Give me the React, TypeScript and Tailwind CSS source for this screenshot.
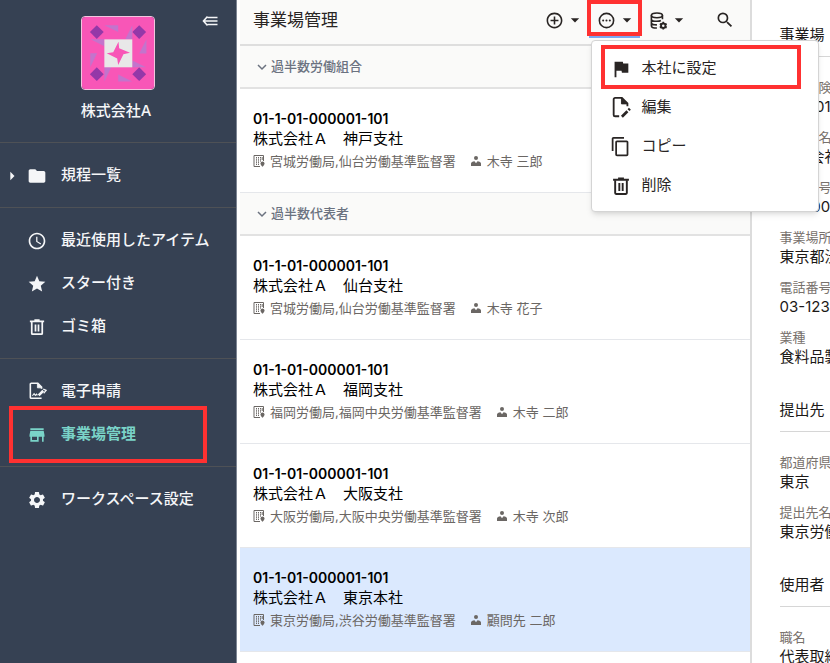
import React, { type ReactNode } from "react";
import {
  MdAccessTime,
  MdAddCircleOutline,
  MdArrowDropDown,
  MdArrowRight,
  MdContentCopy,
  MdFlag,
  MdFolder,
  MdSearch,
  MdSettings,
  MdStar,
  MdStore,
} from "react-icons/md";

function TrashIcon({ size }: { size: number }) {
  return (
    <svg width={size} height={size} viewBox="0 0 24 24" fill="none" stroke="currentColor" strokeWidth="2.300" aria-hidden="true">
      <path d="M2.500 4.500h19M8.500 3h7" strokeWidth="2.600" />
      <path d="M5 5v15.500a1 1 0 0 0 1 1h12a1 1 0 0 0 1-1V5M10 8.500v9.500M14 8.500v9.500" />
    </svg>
  );
}

function MoreIcon() {
  return (
    <svg width="19" height="19" viewBox="0 0 24 24" fill="currentColor" aria-hidden="true">
      <circle cx="12" cy="12" r="9" fill="none" stroke="currentColor" strokeWidth="2" />
      <circle cx="7.800" cy="12" r="1.300" />
      <circle cx="12" cy="12" r="1.300" />
      <circle cx="16.200" cy="12" r="1.300" />
    </svg>
  );
}

function DatabaseGearIcon() {
  return (
    <svg width="19" height="19" viewBox="0 0 24 24" fill="none" stroke="currentColor" strokeWidth="2" aria-hidden="true">
      <ellipse cx="10" cy="5.500" rx="7" ry="3" />
      <path d="M3 5.500v13c0 1.700 3 3 7 3M17 5.500v5M3 10c0 1.700 3 3 7 3 2 0 4-.4 5-1M3 14.500c0 1.700 3 3 7 3" />
      <circle cx="18" cy="18.500" r="2.800" strokeWidth="2.400" />
      <path d="M18 13.500v2M18 21.500v2M13.700 16l1.700 1M20.600 20l1.700 1M13.700 21l1.700-1M20.600 17l1.700-1" strokeWidth="2.200" />
    </svg>
  );
}

function FileEditIcon() {
  return (
    <svg width="22" height="22" viewBox="0 0 24 24" fill="none" stroke="currentColor" strokeWidth="2" aria-hidden="true">
      <path d="M10 21H5.500A1.500 1.500 0 0 1 4 19.500v-17A1.500 1.500 0 0 1 5.500 1H13l6 6v3" />
      <path d="M12.500 1v6.500H19z" fill="currentColor" strokeWidth="1" />
      <path d="M13 21.500l6-6" strokeWidth="3" />
      <path d="M20.200 14.300l1.500-1.500" strokeWidth="3" />
    </svg>
  );
}

function FileSignIcon() {
  return (
    <svg width="20" height="20" viewBox="0 0 24 24" fill="none" stroke="currentColor" strokeWidth="1.900" aria-hidden="true">
      <path d="M17.500 19.500H5a1 1 0 0 1-1-1V2.500a1 1 0 0 1 1-1h8l4.500 4.500v2" />
      <path d="M12.500 1.500v5.500h5.500z" fill="currentColor" strokeWidth="1" />
      <path d="M6.500 16.500l2-2.500 1.500 2 1.500-1.500 1 1.500" strokeWidth="1.300" />
      <path d="M14 16l5.500-5.500" strokeWidth="3" />
      <path d="M19.500 8.500l3.500 1.500-3 3.500" strokeWidth="1.500" />
    </svg>
  );
}

function CollapseIcon() {
  return (
    <svg width="16" height="12" viewBox="0 0 16 12" fill="none" stroke="currentColor" strokeWidth="1.600" aria-hidden="true">
      <path d="M5.500 1.500L1.500 6l4 4.500M2 6h13.500M5.500 2.500h10M5.500 9.500h10" />
    </svg>
  );
}

function BuildingIcon() {
  return (
    <svg className="shrink-0" width="12" height="12" viewBox="0 0 12 12" fill="none" stroke="currentColor" aria-hidden="true">
      <path d="M7 11.500H1V.5h9.500V6" />
      <path d="M3.500 2v8M5.500 2v8M7.500 2v5" strokeDasharray="1.500 .7" />
      <path d="M9.500 6.500a2 2 0 0 0-2 2c0 1.500 2 3.300 2 3.300s2-1.800 2-3.300a2 2 0 0 0-2-2z" fill="currentColor" stroke="none" />
      <path d="M9.200 2v3" />
    </svg>
  );
}

function PersonIcon() {
  return (
    <svg className="shrink-0" width="10" height="12" viewBox="0 0 10 12" fill="currentColor" aria-hidden="true">
      <circle cx="5" cy="3" r="2" />
      <path d="M0 11V8.500C0 7.300 1.500 6.600 3.500 6.300L5 8.300l1.500-2C8.500 6.600 10 7.300 10 8.500V11z" />
    </svg>
  );
}

function ChevronIcon() {
  return (
    <svg className="shrink-0" width="10" height="8" viewBox="0 0 10 8" fill="none" stroke="currentColor" strokeWidth="1.500" aria-hidden="true">
      <path d="M1 2l4 4 4-4" />
    </svg>
  );
}

function Avatar() {
  return (
    <svg className="h-[74px] w-[74px] rounded border border-[#f3c4df]" viewBox="0 0 219 219" role="img" aria-label="株式会社A">
      <rect width="219" height="219" fill="#f856b7" />
      <g fill="#9438a8">
        <path d="M45 25l21 21-21 21-21-21z" />
        <path d="M174 25l21 21-21 21-21-21z" />
        <path d="M45 153l21 21-21 21-21-21z" />
        <path d="M174 153l21 21-21 21-21-21z" />
      </g>
      <g fill="#c374cc">
        <path d="M68 25h42v21z" />
        <path d="M153 25v42h-21z" />
        <path d="M196 68v43h-22z" />
        <path d="M153 132l42 21h-42z" />
        <path d="M153 196h-43v-21z" />
        <path d="M68 196v-43h21z" />
        <path d="M25 153v-43h21z" />
        <path d="M68 89l-42-21h42z" />
      </g>
      <rect x="68" y="68" width="85" height="85" fill="#e8e8e8" />
      <path d="M111 75L113 95 146 109 126 113 110 146 107 126 75 110 95 107z" fill="#f856b7" />
    </svg>
  );
}

type NavEntry = { label: string; icon: ReactNode; active?: boolean; expandable?: boolean };

const navSections: NavEntry[][] = [
  [{ label: "規程一覧", icon: <MdFolder size={20} />, expandable: true }],
  [
    { label: "最近使用したアイテム", icon: <MdAccessTime size={20} /> },
    { label: "スター付き", icon: <MdStar size={20} /> },
    { label: "ゴミ箱", icon: <TrashIcon size={18} /> },
  ],
  [
    { label: "電子申請", icon: <FileSignIcon /> },
    { label: "事業場管理", icon: <MdStore size={20} />, active: true },
  ],
  [{ label: "ワークスペース設定", icon: <MdSettings size={20} /> }],
];

function Sidebar() {
  return (
    <aside className="w-[237px] shrink-0 border-r border-[#7d8593] bg-[#364153] text-[#f5f6f8]">
      <div className="relative flex h-[142px] flex-col items-center pt-4">
        <Avatar />
        <p className="mt-[10px] pr-1 text-[15px] leading-[22px] font-medium">株式会社A</p>
        <button type="button" aria-label="サイドバーを閉じる" className="absolute top-[15px] right-[18px]">
          <CollapseIcon />
        </button>
      </div>
      <nav>
        {navSections.map((section) => (
          <ul key={section[0].label} className="border-t border-[#4e5156] py-[10px] pt-[11px]">
            {section.map((entry) => (
              <li key={entry.label} className="relative">
                <a
                  href="#"
                  className={`flex h-[43px] items-center text-[15px] ${entry.active ? "font-bold text-[#7ad3c8]" : "font-medium"}`}
                >
                  <span className="flex w-[26px] justify-center pr-[2px]">{entry.expandable && <MdArrowRight size={20} />}</span>
                  <span className="flex w-[35px] items-center">
                    <span className="flex w-[21px] justify-center">{entry.icon}</span>
                  </span>
                  {entry.label}
                </a>
                {entry.active && <span className="pointer-events-none absolute -top-[7px] -bottom-[7px] left-[9px] w-[198px] border-4 border-[#ff3131]" />}
              </li>
            ))}
          </ul>
        ))}
      </nav>
    </aside>
  );
}

const menuEntries = [
  { label: "本社に設定", icon: <MdFlag size={22} />, marked: true },
  { label: "編集", icon: <FileEditIcon /> },
  { label: "コピー", icon: <MdContentCopy size={21} /> },
  { label: "削除", icon: <TrashIcon size={20} /> },
];

function ActionMenu() {
  return (
    <ul role="menu" className="absolute top-[40px] left-[2px] z-10 w-[228px] rounded border border-[#d4d4d4] bg-white pt-2 pb-1.5 shadow-md">
      {menuEntries.map((entry) => (
        <li key={entry.label} role="none" className="relative">
          <button type="button" role="menuitem" className="flex h-[39px] w-full items-center pl-[18px] text-left text-[15px]">
            <span className="flex w-[32px] items-center">
              <span className="flex w-[22px] justify-center">{entry.icon}</span>
            </span>
            {entry.label}
          </button>
          {entry.marked && <span className="pointer-events-none absolute -top-[4px] -bottom-[1px] left-[9px] w-[200px] border-4 border-[#ff3131]" />}
        </li>
      ))}
    </ul>
  );
}

function ToolButton({ label, children }: { label: string; children: ReactNode }) {
  return (
    <button type="button" aria-label={label} className="flex h-10 w-[52px] items-center pl-[8px]">
      {children}
      <MdArrowDropDown className="ml-px" size={20} />
    </button>
  );
}

type Office = { name: string; bureau: string; person: string; selected?: boolean };

const groups: { title: string; offices: Office[] }[] = [
  {
    title: "過半数労働組合",
    offices: [{ name: "神戸支社", bureau: "宮城労働局,仙台労働基準監督署", person: "木寺 三郎" }],
  },
  {
    title: "過半数代表者",
    offices: [
      { name: "仙台支社", bureau: "宮城労働局,仙台労働基準監督署", person: "木寺 花子" },
      { name: "福岡支社", bureau: "福岡労働局,福岡中央労働基準監督署", person: "木寺 二郎" },
      { name: "大阪支社", bureau: "大阪労働局,大阪中央労働基準監督署", person: "木寺 次郎" },
      { name: "東京本社", bureau: "東京労働局,渋谷労働基準監督署", person: "顧問先 二郎", selected: true },
    ],
  },
];

function OfficeList() {
  return (
    <main className="w-[62%] shrink-0 border-r-2 border-[#dcdcdc] bg-white pl-[3px]">
      <header className="flex h-[46px] items-start border-b-2 border-[#dedede] bg-[#fafaf9] pl-[13px] text-[#292524]">
        <h1 className="text-[17px] leading-10">事業場管理</h1>
        <div className="ml-auto flex pr-[7px]">
          <ToolButton label="追加">
            <MdAddCircleOutline size={19} />
          </ToolButton>
          <div className="relative">
            <ToolButton label="その他の操作">
              <MoreIcon />
            </ToolButton>
            <span className="pointer-events-none absolute top-0 left-0 h-[38px] w-[51px] border-b-2 border-[#7ba7f0]" />
            <span className="pointer-events-none absolute top-0 -left-[2px] h-[36px] w-[55px] border-4 border-[#ff3131]" />
            <ActionMenu />
          </div>
          <ToolButton label="データ管理">
            <DatabaseGearIcon />
          </ToolButton>
          <button type="button" aria-label="検索" className="ml-[14px] flex h-10 w-9 items-center justify-center">
            <MdSearch size={20} />
          </button>
        </div>
      </header>
      {groups.map((group) => (
        <section key={group.title}>
          <h2 className="h-[43px] border-b-2 border-[#e2e2e2] bg-[#fafaf9] text-[13px] font-medium text-[#6b7280]">
            <button type="button" className="flex h-[41px] items-center gap-[4px] pl-[17px]">
              <ChevronIcon />
              {group.title}
            </button>
          </h2>
          <ul>
            {group.offices.map((office) => (
              <li
                key={office.name}
                className={`h-[104px] border-b border-[#e5e7eb] pt-5 pl-[13px] whitespace-nowrap ${office.selected ? "bg-[#dbe9fe]" : "bg-white"}`}
              >
                <p className="text-[14px] leading-5 font-semibold text-black">01-1-01-000001-101</p>
                <p className="text-[15px] leading-5 text-black">株式会社Ａ　{office.name}</p>
                <p className="flex items-center text-[13px] leading-6 text-[#6b6764]">
                  <BuildingIcon />
                  <span className="mr-[15px] ml-[5px]">{office.bureau}</span>
                  <PersonIcon />
                  <span className="ml-[6px]">{office.person}</span>
                </p>
              </li>
            ))}
          </ul>
        </section>
      ))}
    </main>
  );
}

const detailSections = [
  {
    title: "事業場",
    fields: [
      ["労働保険番号", "01-1-01-000001-101"],
      ["事業場名", "株式会社Ａ"],
      ["郵便番号", "150-0002"],
      ["事業場所在地", "東京都渋谷区"],
      ["電話番号", "03-1234-5678"],
      ["業種", "食料品製造業"],
    ],
  },
  {
    title: "提出先",
    fields: [
      ["都道府県", "東京"],
      ["提出先名", "東京労働局"],
    ],
  },
  { title: "使用者", fields: [["職名", "代表取締役"]] },
];

function DetailPanel() {
  return (
    <section className="flex min-w-0 flex-1 flex-col gap-[31px] overflow-hidden pt-[23px] pl-7 whitespace-nowrap text-[#1c1917]">
      {detailSections.map((section) => (
        <div key={section.title}>
          <h2 className="border-b border-[#d6d6d6] pb-[9px] text-[15px] leading-6">{section.title}</h2>
          <dl className="mt-5 flex flex-col gap-[10px]">
            {section.fields.map(([label, value]) => (
              <div key={label}>
                <dt className="text-[13px] leading-5 text-[#78716c]">{label}</dt>
                <dd className="text-[15px] leading-5">{value}</dd>
              </div>
            ))}
          </dl>
        </div>
      ))}
    </section>
  );
}

export default function App() {
  return (
    <div className="flex h-screen overflow-hidden bg-white font-['Inter','Noto_Sans_CJK_JP',sans-serif]" lang="ja">
      <Sidebar />
      <OfficeList />
      <DetailPanel />
    </div>
  );
}
